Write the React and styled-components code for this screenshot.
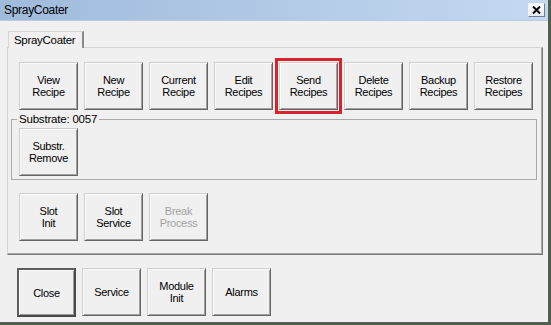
import React from 'react'
import styled, { createGlobalStyle, css } from 'styled-components'

const GlobalStyle = createGlobalStyle`
    html, body {
        margin:0;
        padding:0;
        background:#4d5e4b;
    }
    body {
        width:551px;
        height:325px;
        overflow:hidden;
        font-family:"Liberation Sans", Arial, sans-serif;
    }
`;

const topButtons = [
    ['View', 'Recipe'],
    ['New', 'Recipe'],
    ['Current', 'Recipe'],
    ['Edit', 'Recipes'],
    ['Send', 'Recipes'],
    ['Delete', 'Recipes'],
    ['Backup', 'Recipes'],
    ['Restore', 'Recipes'],
];

const App = () => {
    return (
        <>
            <GlobalStyle />
            <Window>
                <TitleBar>
                    <Title>SprayCoater</Title>
                    <CloseBox>
                        <svg width="9" height="8" viewBox="0 0 9 8">
                            <path d="M1 0.5 L8 7.5 M8 0.5 L1 7.5" stroke="#000" strokeWidth="2" />
                        </svg>
                    </CloseBox>
                </TitleBar>
                <Body>
                    <TabStrip>
                        <Tab>SprayCoater</Tab>
                    </TabStrip>
                    <Panel>
                        <Row>
                            {topButtons.map(([a, b]) => (
                                <Btn key={a} $marked={a === 'Send'}>{a}<br />{b}</Btn>
                            ))}
                        </Row>
                        <Group>
                            <Legend>Substrate: 0057</Legend>
                            <Btn>Substr.<br />Remove</Btn>
                        </Group>
                        <Row $top={13}>
                            <Btn>Slot<br />Init</Btn>
                            <Btn>Slot<br />Service</Btn>
                            <Btn $muted>Break<br />Process</Btn>
                        </Row>
                    </Panel>
                    <BottomRow>
                        <Btn $default>Close</Btn>
                        <Btn>Service</Btn>
                        <Btn>Module<br />Init</Btn>
                        <Btn>Alarms</Btn>
                    </BottomRow>
                </Body>
            </Window>
        </>
    )
}

export default App;


const Window = styled.div`
    width:549px;
    height:323px;
    box-sizing:border-box;
    background:#f0f0f0;
    border-right:1px solid #5c5c5c;
    border-bottom:1px solid #5c5c5c;
    display:flex;
    flex-direction:column;
`;

const TitleBar = styled.div`
    height:21px;
    flex-shrink:0;
    display:flex;
    align-items:center;
    justify-content:space-between;
    padding:0 3px 0 4px;
    background:linear-gradient(to right, #9fbadb, #c4d9f1);
    border-bottom:1px solid #b8cbe2;
    box-sizing:border-box;
`;

const Title = styled.span`
    font-size:12px;
    letter-spacing:-0.3px;
    color:#000;
`;

const CloseBox = styled.div`
    width:17px;
    height:14px;
    box-sizing:border-box;
    border:1px solid #f4f7fb;
    border-right-color:#6f7f93;
    border-bottom-color:#6f7f93;
    background:linear-gradient(#ffffff, #e6ecf4);
    display:flex;
    align-items:center;
    justify-content:center;
`;

const Body = styled.div`
    padding:10px 0 0 7px;
    display:flex;
    flex-direction:column;
`;

const TabStrip = styled.div`
    display:flex;
    padding-left:1px;
`;

const Tab = styled.div`
    height:17px;
    box-sizing:border-box;
    padding:1px 7px 0 5px;
    font-size:11.5px;
    letter-spacing:-0.3px;
    line-height:14px;
    color:#000;
    background:#f0f0f0;
    border:1px solid #d6d6d6;
    border-right:2px solid #8a8a8a;
    border-bottom:none;
    margin-bottom:-1px;
    position:relative;
    z-index:1;
`;

const Panel = styled.div`
    width:536px;
    box-sizing:border-box;
    padding:14px 5px 13px 3px;
    border:1px solid #d4d4d4;
    border-right-color:#7a7a7a;
    border-bottom-color:#7a7a7a;
    box-shadow:inset -1px -1px #a8a8a8;
    display:flex;
    flex-direction:column;
`;

const Row = styled.div`
    display:flex;
    gap:6px;
    padding-left:8px;
    margin-top:${p => p.$top || 0}px;
`;

const Group = styled.fieldset`
    margin:3px 0 0 0;
    padding:2px 7px 3px 7px;
    border:1px solid #a9a9a9;
    display:flex;
`;

const Legend = styled.legend`
    padding:0 2px;
    margin-left:-2px;
    font-size:11.5px;
    letter-spacing:-0.2px;
    line-height:13px;
    color:#000;
`;

const BottomRow = styled.div`
    display:flex;
    gap:6px;
    align-items:flex-start;
    margin-top:13px;
    padding-left:10px;
`;

const Btn = styled.div`
    width:59px;
    height:48px;
    box-sizing:border-box;
    display:flex;
    align-items:center;
    justify-content:center;
    text-align:center;
    font-size:11px;
    letter-spacing:-0.3px;
    line-height:12px;
    color:${p => p.$muted ? '#a3a3a3' : '#000'};
    background:#f0f0f0;
    border:1px solid #cfcfcf;
    border-right-color:#646464;
    border-bottom-color:#646464;
    box-shadow:inset 1px 1px #fbfbfb, inset -1px -1px #a0a0a0;
    ${p => p.$default && css`
        height:49px;
        border:2px solid #4a4a4a;
        border-top-color:#5e5e5e;
        border-left-color:#5e5e5e;
        box-shadow:inset 1px 1px #fdfdfd, inset -1px -1px #9a9a9a;
    `}
    ${p => p.$marked && css`
        outline:3px solid #d8222c;
        outline-offset:1px;
    `}
`;
